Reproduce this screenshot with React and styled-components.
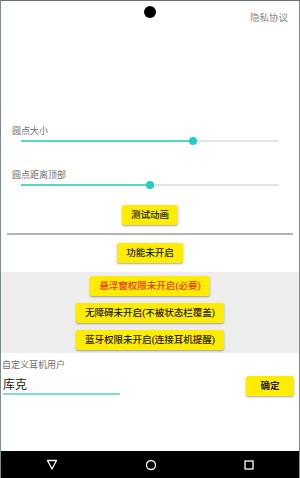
import React from "react";
import styled, { createGlobalStyle } from "styled-components";

const Global = createGlobalStyle`
  html, body {
    margin: 0;
    padding: 0;
    background: #ffffff;
  }
  * {
    box-sizing: border-box;
  }
`;

const Screen = styled.div`
  width: 300px;
  height: 478px;
  display: flex;
  flex-direction: column;
  border-top: 1px solid #6a6f6f;
  border-left: 1px solid #7b8c8a;
  border-right: 1px solid #7b8c8a;
  font-family: Roboto, "Noto Sans CJK SC", sans-serif;
  overflow: hidden;
`;

const Content = styled.div`
  flex: 1;
  position: relative;
  display: flex;
  flex-direction: column;
`;

const FloatDot = styled.div`
  position: absolute;
  top: 5px;
  left: 143px;
  width: 12px;
  height: 12px;
  border-radius: 50%;
  background: #000;
`;

const TopBar = styled.div`
  display: flex;
  justify-content: flex-end;
  padding: 11px 11px 0 0;
`;

const LinkText = styled.span`
  font-size: 9.5px;
  line-height: 12px;
  color: #888;
`;

const Settings = styled.div`
  margin-top: 101px;
  display: flex;
  flex-direction: column;
`;

const Label = styled.div`
  font-size: 9px;
  line-height: 12px;
  color: #6f6f6f;
  padding-left: ${(p) => p.$indent || 11}px;
  margin-top: ${(p) => p.$top || 0}px;
`;

const SliderRow = styled.div`
  position: relative;
  height: 8px;
  margin: 0 20px;
  display: flex;
  align-items: center;
`;

const Track = styled.div`
  width: 100%;
  height: 2px;
  background: #e4e4e4;
`;

const Fill = styled.div`
  height: 100%;
  background: #55d6cb;
`;

const Thumb = styled.div`
  position: absolute;
  top: 0;
  width: 8px;
  height: 8px;
  margin-left: -4px;
  border-radius: 50%;
  background: #1fd0c0;
`;

const Slider = ({ value }) => (
  <SliderRow>
    <Track>
      <Fill style={{ width: `${value * 100}%` }} />
    </Track>
    <Thumb style={{ left: `${value * 100}%` }} />
  </SliderRow>
);

const Center = styled.div`
  display: flex;
  justify-content: center;
  margin-top: ${(p) => p.$top || 0}px;
`;

const YellowButton = styled.button`
  height: 20px;
  padding: 0 ${(p) => p.$pad || 9}px;
  border: none;
  border-radius: 2px;
  background: #ffec00;
  box-shadow: 0 1px 2px rgba(0, 0, 0, 0.35);
  font-family: Roboto, "Noto Sans CJK SC", sans-serif;
  font-size: 9.5px;
  font-weight: 500;
  line-height: 20px;
  color: ${(p) => (p.$alert ? "#f2311c" : "#222")};
  white-space: nowrap;
`;

const Divider = styled.div`
  height: 2px;
  margin: 8px 6px 0;
  background: #b3b3b3;
`;

const PermissionBand = styled.div`
  margin-top: 9px;
  padding: 4px 0 3px;
  background: #eeeeee;
  display: flex;
  flex-direction: column;
  align-items: center;
  gap: 7px;
`;

const UserRow = styled.div`
  display: flex;
  justify-content: space-between;
  align-items: flex-start;
  padding: 0 5px 0 2px;
`;

const NameInput = styled.div`
  width: 117px;
  padding-top: 6px;
  font-size: 12px;
  line-height: 16px;
  color: #222;
  border-bottom: 2px solid #7fdcd3;
`;

const ConfirmButton = styled(YellowButton)`
  width: 48px;
  margin-top: 5px;
  padding: 0;
  font-weight: 700;
`;

const NavBar = styled.div`
  height: 27px;
  background: #000;
  display: flex;
  align-items: center;
  justify-content: space-between;
  padding: 0 40px 0 41px;
`;

const NavIcon = styled.svg`
  width: 20px;
  height: 12px;
`;

export default function App() {
  return (
    <>
      <Global />
      <Screen>
        <Content>
          <FloatDot />
          <TopBar>
            <LinkText>隐私协议</LinkText>
          </TopBar>
          <Settings>
            <Label>圆点大小</Label>
            <Slider value={0.667} />
            <Label $top={24}>圆点距离顶部</Label>
            <Slider value={0.5} />
          </Settings>
          <Center $top={16}>
            <YellowButton>测试动画</YellowButton>
          </Center>
          <Divider />
          <Center $top={8}>
            <YellowButton>功能未开启</YellowButton>
          </Center>
          <PermissionBand>
            <YellowButton $alert>悬浮窗权限未开启(必要)</YellowButton>
            <YellowButton>无障碍未开启(不被状态栏覆盖)</YellowButton>
            <YellowButton>蓝牙权限未开启(连接耳机提醒)</YellowButton>
          </PermissionBand>
          <Label $indent={1} $top={6}>自定义耳机用户</Label>
          <UserRow>
            <NameInput>库克</NameInput>
            <ConfirmButton>确定</ConfirmButton>
          </UserRow>
        </Content>
        <NavBar>
          <NavIcon viewBox="0 0 20 12">
            <path d="M5.5 1.5 L14.5 1.5 L10 10 Z" fill="none" stroke="#fff" strokeWidth="1.3" strokeLinejoin="round" />
          </NavIcon>
          <NavIcon viewBox="0 0 20 12">
            <circle cx="10" cy="6" r="4.5" fill="none" stroke="#fff" strokeWidth="1.3" />
          </NavIcon>
          <NavIcon viewBox="0 0 20 12">
            <rect x="6" y="2" width="8" height="8" fill="none" stroke="#fff" strokeWidth="1.3" />
          </NavIcon>
        </NavBar>
      </Screen>
    </>
  );
}
